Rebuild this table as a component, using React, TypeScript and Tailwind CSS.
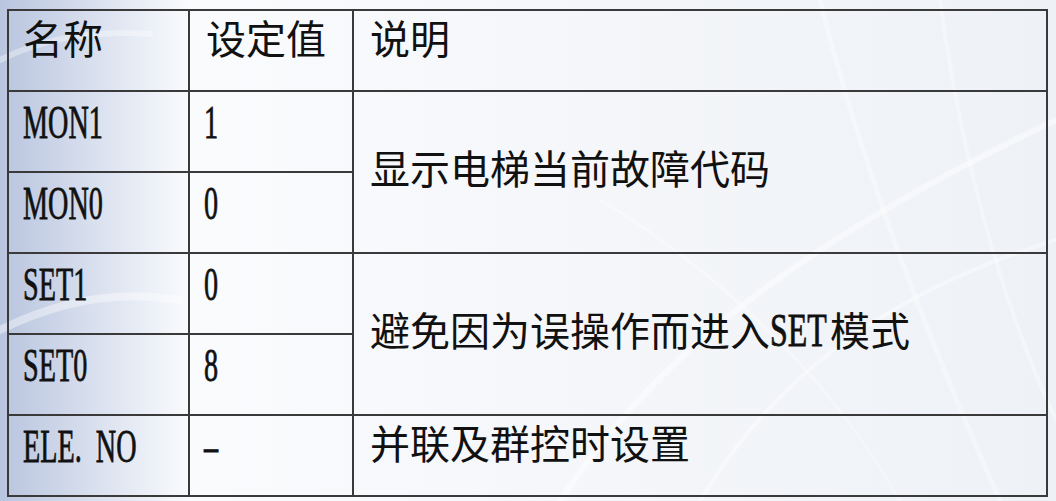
import React from 'react';

const serif = { fontFamily: '"Liberation Serif", "Noto Sans CJK SC", serif' };

// Latin text in the original is a narrow half-width serif; squeeze Liberation Serif to match
function Narrow({ children, wide }: { children: React.ReactNode; wide?: boolean }) {
  const inner = (
    <span
      className={
        wide
          ? 'inline-block origin-left scale-x-[0.68] whitespace-nowrap text-[47px] [-webkit-text-stroke:0.8px_#111]'
          : 'inline-block origin-left scale-x-[0.6] whitespace-nowrap text-[47px] [-webkit-text-stroke:0.8px_#111]'
      }
    >
      {children}
    </span>
  );
  if (!wide) return inner;
  return <span className="inline-block w-[60px] whitespace-nowrap align-baseline">{inner}</span>;
}

function Backdrop() {
  return (
    <svg className="absolute inset-0 h-full w-full" viewBox="0 0 1056 501" preserveAspectRatio="none">
      <g fill="none" stroke="#ffffff" strokeLinecap="round">
        <path d="M560 501 C 640 380, 760 260, 1056 120" strokeWidth="6" opacity="0.45" />
        <path d="M700 501 C 760 400, 860 300, 1056 240" strokeWidth="4" opacity="0.4" />
        <path d="M820 0 C 860 160, 920 320, 1000 501" strokeWidth="5" opacity="0.35" />
        <path d="M940 0 C 960 150, 1000 300, 1056 420" strokeWidth="4" opacity="0.35" />
        <path d="M600 200 C 700 260, 820 360, 900 501" strokeWidth="3" opacity="0.3" />
        <path d="M0 330 C 60 300, 120 290, 180 300" strokeWidth="8" opacity="0.4" />
        <path d="M0 60 C 40 40, 90 30, 150 34" strokeWidth="6" opacity="0.35" />
      </g>
    </svg>
  );
}

export default function App() {
  const line = 'border-2 border-[#3a3a3a]';
  const cell = `${line} align-top pt-[6px] leading-[48px] text-[40px] text-[#111]`;
  const span = `${line} align-middle pl-[16px] text-[40px] leading-[48px] text-[#111] whitespace-nowrap`;

  return (
    <div className="relative h-[501px] w-[1056px] overflow-hidden bg-gradient-to-r from-[#b9c5df] via-[#fafbfd] via-[18%] to-[#eef1f6]" style={serif}>
      <Backdrop />
      <div className="relative pl-[7px] pt-[9px]">
        <table className="w-[1041px] table-fixed border-collapse">
          <colgroup>
            <col className="w-[181px]" />
            <col className="w-[164px]" />
            <col />
          </colgroup>
          <tbody>
            <tr className="h-[81px]">
              <td className={`${cell} pl-[14px]`}>名称</td>
              <td className={`${cell} pl-[16px]`}>设定值</td>
              <td className={`${cell} pl-[16px]`}>说明</td>
            </tr>
            <tr className="h-[81px]">
              <td className={`${cell} pl-[14px]`}><Narrow>MON1</Narrow></td>
              <td className={`${cell} pl-[14px]`}><Narrow>1</Narrow></td>
              <td rowSpan={2} className={`${span} pb-[2px]`}>显示电梯当前故障代码</td>
            </tr>
            <tr className="h-[81px]">
              <td className={`${cell} pl-[14px]`}><Narrow>MON0</Narrow></td>
              <td className={`${cell} pl-[14px]`}><Narrow>0</Narrow></td>
            </tr>
            <tr className="h-[81px]">
              <td className={`${cell} pl-[14px]`}><Narrow>SET1</Narrow></td>
              <td className={`${cell} pl-[14px]`}><Narrow>0</Narrow></td>
              <td rowSpan={2} className={`${span} pb-[6px]`}>
                避免因为误操作而进入<Narrow wide>SET</Narrow>模式
              </td>
            </tr>
            <tr className="h-[81px]">
              <td className={`${cell} pl-[14px]`}><Narrow>SET0</Narrow></td>
              <td className={`${cell} pl-[14px]`}><Narrow>8</Narrow></td>
            </tr>
            <tr className="h-[81px]">
              <td className={`${cell} pl-[14px]`}><Narrow>ELE.&nbsp;&nbsp;NO</Narrow></td>
              <td className={`${cell} pl-[14px]`}><Narrow>–</Narrow></td>
              <td className={`${cell} pl-[16px]`}>并联及群控时设置</td>
            </tr>
          </tbody>
        </table>
      </div>
    </div>
  );
}
